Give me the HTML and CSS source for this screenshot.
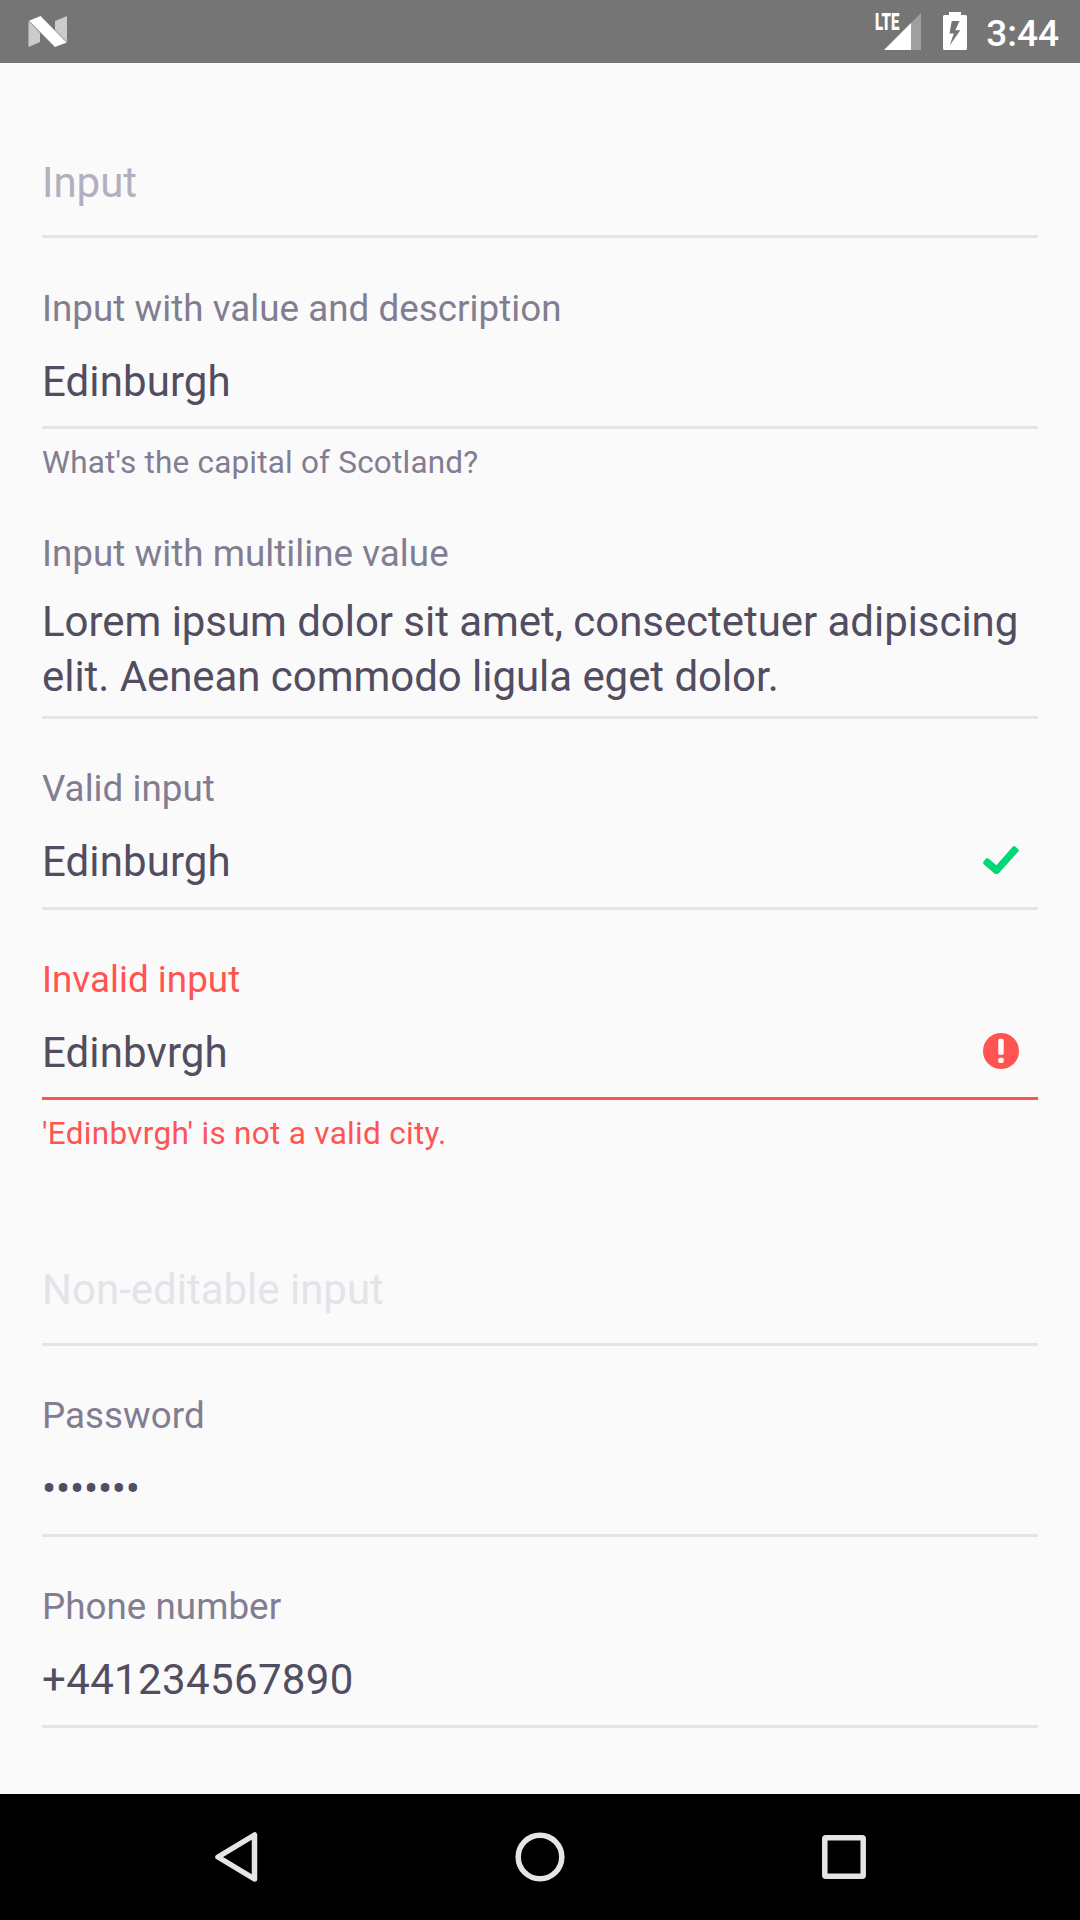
FILE: index.html
```html
<!DOCTYPE html>
<html lang="en">
<head>
<meta charset="utf-8">
<title>Inputs</title>
<link rel="stylesheet" href="styles.css">
</head>
<body>
<div class="screen">
  <header class="status-bar">
    <svg class="n-logo" width="40" height="32" viewBox="0 0 40 32">
      <path d="M.5 5 12 17v9L.5 31zM39 0v26L27 14V5z" fill="#cbcbcb"/>
      <path d="M1 4.8 12.5 0 38.6 26.4 27 31z" fill="#fff"/>
    </svg>
    <div class="status-icons">
      <div class="signal">
        <svg width="37" height="37" viewBox="0 0 37 37">
          <path d="M37 0v37H27V10z" fill="#9f9f9f"/>
          <path d="M27 10v27H0z" fill="#fff"/>
        </svg>
        <span class="signal-type">LTE</span>
      </div>
      <svg class="battery" width="24" height="38" viewBox="0 0 24 38">
        <path fill-rule="evenodd" fill="#fff" d="M6 0h12v3h4.500Q24 3 24 4.500V36.500Q24 38 22.500 38H1.500Q0 38 0 36.500V4.500Q0 3 1.500 3H6zM8.700 9 6.500 21.500h4.300L6.700 33.500 17.300 18.300h-5L16.500 9z"/>
      </svg>
      <span class="clock">3:44</span>
    </div>
  </header>

  <main class="form">
    <div class="field field--empty">
      <div class="value">Input</div>
    </div>
    <div class="field field--described">
      <div class="label">Input with value and description</div>
      <div class="value">Edinburgh</div>
    </div>
    <p class="helper">What's the capital of Scotland?</p>
    <div class="field field--multiline">
      <div class="label">Input with multiline value</div>
      <div class="value">Lorem ipsum dolor sit amet, consectetuer adipiscing elit. Aenean commodo ligula eget dolor.</div>
    </div>
    <div class="field">
      <div class="label">Valid input</div>
      <div class="value">Edinburgh
        <svg class="state-icon" width="36" height="28" viewBox="0 0 36 28">
          <path fill="#00d775" d="M.5 15.600 3.200 12.500Q4.200 11.600 5.400 12.500L13.400 19.200 29.700.8Q31-.5 32.200.5L35.300 3.200Q36.300 4.200 35.400 5.400L16 27Q13.500 29 11.200 27.300L.7 18.200Q-.5 17 .5 15.600z"/>
        </svg>
      </div>
    </div>
    <div class="field field--invalid">
      <div class="label">Invalid input</div>
      <div class="value">Edinbvrgh
        <svg class="state-icon" width="36" height="36" viewBox="0 0 36 36">
          <circle cx="18" cy="18" r="18" fill="#ff5452"/>
          <rect x="15.300" y="5.700" width="5.400" height="16" rx="1.500" fill="#fafafa"/>
          <rect x="15.300" y="24.700" width="5.400" height="5.400" rx="1.800" fill="#fafafa"/>
        </svg>
      </div>
    </div>
    <p class="helper helper--invalid">'Edinbvrgh' is not a valid city.</p>
    <div class="field field--disabled">
      <div class="value">Non-editable input</div>
    </div>
    <div class="field">
      <div class="label">Password</div>
      <div class="value value--password">•••••••</div>
    </div>
    <div class="field">
      <div class="label">Phone number</div>
      <div class="value value--phone">+441234567890</div>
    </div>
  </main>

  <nav class="nav-bar">
    <svg width="50" height="50" viewBox="0 0 50 50"><path d="M4 25 40.500 3V47z"/></svg>
    <svg width="50" height="50" viewBox="0 0 50 50"><circle cx="25" cy="25" r="21.800"/></svg>
    <svg width="50" height="50" viewBox="0 0 50 50"><rect x="8.800" y="5.800" width="38.400" height="38.400" rx="1"/></svg>
  </nav>
</div>
</body>
</html>
```

FILE: styles.css
```css
* {
  box-sizing: border-box;
}

body {
  margin: 0;
  background: #fafafa;
  font-family: Roboto, "Noto Sans", sans-serif;
}

svg {
  display: block;
  flex: none;
}

.screen {
  display: flex;
  flex-direction: column;
  width: 1080px;
  height: 1920px;
}

.status-bar {
  display: flex;
  justify-content: space-between;
  flex: none;
  height: 63px;
  padding: 0 21px 0 28px;
  background: #757575;
}

.n-logo {
  margin-top: 16px;
}

.status-icons {
  display: flex;
  align-items: flex-start;
}

.signal {
  position: relative;
  margin: 13px 22px 0 0;
}

.signal-type {
  position: absolute;
  left: -9px;
  top: -2px;
  color: #fff;
  font-size: 23px;
  font-weight: 900;
  line-height: 23px;
  transform: scaleX(0.65);
  transform-origin: left;
}

.battery {
  margin: 12px 19px 0 0;
}

.clock {
  padding-top: 13px;
  color: #fff;
  font-size: 37px;
  font-weight: 500;
  line-height: 42px;
}

.form {
  flex: 1;
  padding: 0 42px;
}

.field {
  margin-top: 49px;
  padding-bottom: 18px;
  border-bottom: 3px solid #e4e3e9;
}

.label {
  margin-bottom: 24px;
  color: #837d92;
  font-size: 36.75px;
  line-height: 42px;
  letter-spacing: 0.04px;
}

.value {
  display: flex;
  justify-content: space-between;
  align-items: center;
  min-height: 55px;
  padding-right: 19px;
  color: #524d60;
  font-size: 42px;
  line-height: 55px;
  letter-spacing: 0.1px;
}

.value--password {
  letter-spacing: -0.2px;
}

.value--phone {
  letter-spacing: 0.36px;
}

.state-icon {
  margin-bottom: 3px;
}

.helper {
  margin: 15px 0 0;
  color: #837d92;
  font-size: 31.5px;
  line-height: 38px;
  letter-spacing: 0.2px;
}

.helper + .field {
  margin-top: 51px;
}

.field--empty {
  margin-top: 92px;
  padding-bottom: 25px;
}

.field--empty .value {
  color: #b3afbf;
  letter-spacing: 0;
}

.field--described {
  margin-top: 50px;
  padding-bottom: 17px;
}

.field--multiline {
  padding-bottom: 12px;
}

.field--multiline .label {
  margin-bottom: 19px;
}

.field--multiline .value {
  padding-right: 0;
  letter-spacing: -0.05px;
}

.field--invalid {
  padding-bottom: 17px;
  border-color: #ff5452;
}

.field--invalid .label,
.helper--invalid {
  color: #ff5452;
}

.helper--invalid {
  letter-spacing: 0.3px;
}

.helper + .field--disabled {
  margin-top: 109px;
  padding-bottom: 26px;
}

.field--disabled .value {
  color: #e4e3e9;
  letter-spacing: 0;
}

.nav-bar {
  display: flex;
  justify-content: space-between;
  align-items: center;
  flex: none;
  height: 126px;
  padding: 0 214px;
  background: #000;
}

.nav-bar svg {
  fill: none;
  stroke: #e5e5e5;
  stroke-width: 5.5px;
  stroke-linejoin: round;
}
```
